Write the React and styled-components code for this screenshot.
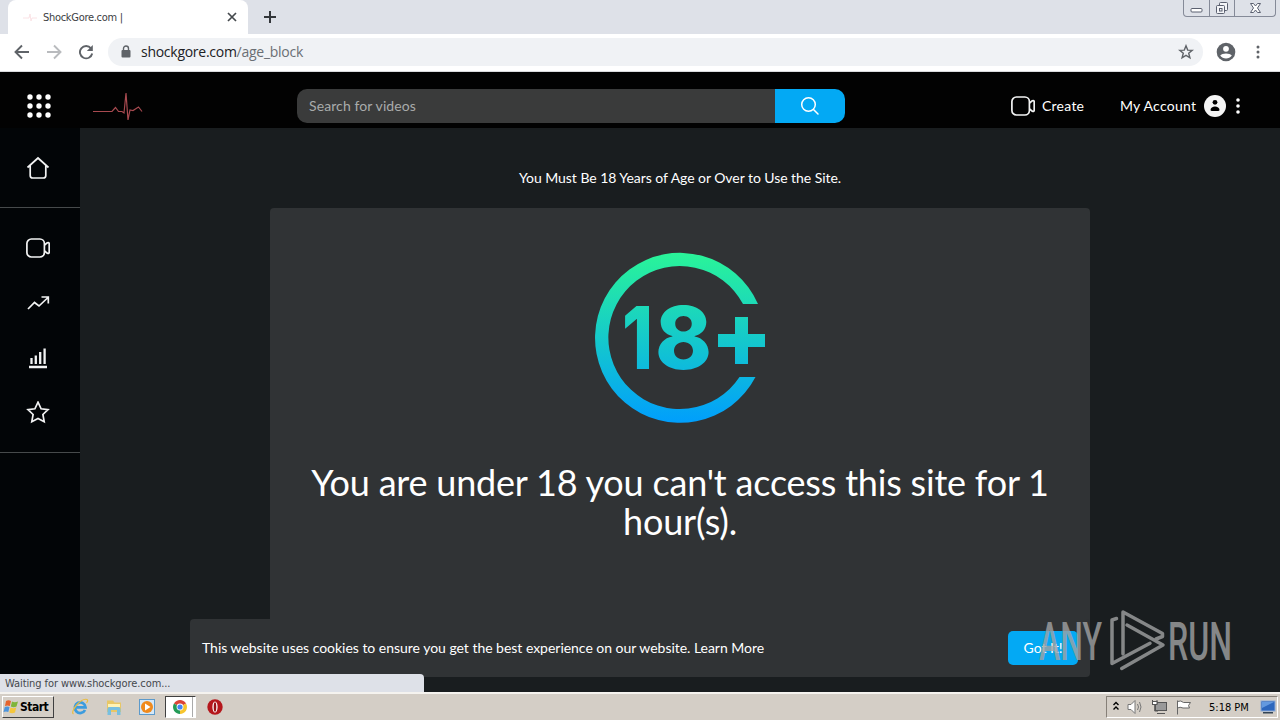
import React from 'react';
import styled, { createGlobalStyle } from 'styled-components';

const App = () => {
  return (
    <Desktop>
      <GlobalStyle />
      <TabStrip>
        <Tab>
          <Favicon viewBox="0 0 16 16">
            <path d="M1 9H7L8 5L9 12L10 9H15" />
          </Favicon>
          <TabTitle>ShockGore.com |</TabTitle>
          <CloseTab viewBox="0 0 10 10">
            <path d="M1 1L9 9M9 1L1 9" />
          </CloseTab>
        </Tab>
        <NewTab viewBox="0 0 14 14">
          <path d="M7 1V13M1 7H13" />
        </NewTab>
        <WindowButtons>
          <WindowButton $width={25}>
            <svg width="13" height="18" fill="#fff" stroke="#5b6070">
              <rect x="1" y="8.5" width="11" height="3.5" rx="1" />
            </svg>
          </WindowButton>
          <WindowButton $width={25}>
            <svg width="14" height="18" fill="#f4f5f8" stroke="#5b6070">
              <rect x="4.5" y="2.5" width="8" height="8" rx="1" />
              <rect x="1.5" y="5.5" width="8" height="8" rx="1" />
              <rect x="4.5" y="8.5" width="2.5" height="2.5" />
            </svg>
          </WindowButton>
          <WindowButton $width={41}>
            <svg width="13" height="18" fill="#fff" stroke="#5b6070">
              <path d="M1.5 3.5H4.5L6.5 6L8.5 3.5H11.5L8.5 8L11.5 12.500H8.500L6.500 10L4.500 12.500H1.500L4.500 8Z" />
            </svg>
          </WindowButton>
        </WindowButtons>
      </TabStrip>

      <Toolbar>
        <NavIcon viewBox="0 0 16 16">
          <path d="M15 8H2M8 1.500L1.500 8L8 14.500" />
        </NavIcon>
        <NavIcon viewBox="0 0 16 16" $muted>
          <path d="M1 8H14M8 1.500L14.500 8L8 14.500" />
        </NavIcon>
        <NavIcon viewBox="0 0 16 16">
          <path d="M13 4.300A6.200 6.200 0 1 0 14.200 9.500" />
          <path d="M14.800 1V7H8.800Z" fill="#5f6368" stroke="none" />
        </NavIcon>
        <AddressBar>
          <svg width="10" height="13" viewBox="0 0 10 13">
            <path d="M2.500 6V3.500a2.500 2.500 0 0 1 5 0V6" fill="none" stroke="#5f6368" strokeWidth="1.400" />
            <rect x="0.500" y="5" width="9" height="7.500" rx="1" fill="#5f6368" />
          </svg>
          <Url>shockgore.com<span>/age_block</span></Url>
          <svg width="16" height="16" viewBox="0 0 16 16" fill="none" stroke="#5f6368" strokeWidth="1.400">
            <path d="M8 1.800L9.700 6.100L14.200 6.400L10.700 9.300L11.900 13.800L8 11.300L4.100 13.800L5.300 9.300L1.800 6.400L6.300 6.100Z" />
          </svg>
        </AddressBar>
        <svg width="20" height="20" viewBox="0 0 20 20">
          <circle cx="10" cy="10" r="9.300" fill="#5f6368" />
          <circle cx="10" cy="6.800" r="2.900" fill="#fff" />
          <path d="M4.200 13.500C6 10.800 14 10.800 15.800 13.500A7 7 0 0 1 4.200 13.500Z" fill="#fff" />
        </svg>
        <ChromeMenu viewBox="0 0 4 16">
          <circle cx="2" cy="3" r="1.500" />
          <circle cx="2" cy="8" r="1.500" />
          <circle cx="2" cy="13" r="1.500" />
        </ChromeMenu>
      </Toolbar>

      <Page>
        <Header>
          <AppsIcon viewBox="0 0 26 26">
            {[4, 13, 22].map((y) => [4, 13, 22].map((x) => <circle key={`${x}-${y}`} cx={x} cy={y} r="2.700" />))}
          </AppsIcon>
          <Pulse viewBox="0 0 52 34">
            <path d="M1 22.500H20L23.500 18.500L26.500 22.500H30L32 24L34 4L36 31L38 21L41 21.500L46.500 18L50 22.500" />
          </Pulse>
          <SearchBox>
            <SearchInput>Search for videos</SearchInput>
            <SearchButton>
              <svg width="20" height="20" viewBox="0 0 20 20" fill="none" stroke="#fff" strokeWidth="1.500" strokeLinecap="round">
                <circle cx="8.500" cy="8.500" r="6.800" />
                <path d="M13.500 13.500L18 18" />
              </svg>
            </SearchButton>
          </SearchBox>
          <Create>
            <CameraIcon />
            <Label>Create</Label>
          </Create>
          <Account>
            <Label>My Account</Label>
            <svg width="22" height="22" viewBox="0 0 22 22">
              <circle cx="11" cy="11" r="11" fill="#f5f5f5" />
              <circle cx="11" cy="7.300" r="2.400" fill="#000" />
              <path d="M6.500 15C6.500 10.300 15.500 10.300 15.500 15Q15.500 16 14 16H8Q6.500 16 6.500 15Z" fill="#000" />
            </svg>
          </Account>
          <SiteMenu viewBox="0 0 4 18">
            <circle cx="2" cy="3" r="1.800" />
            <circle cx="2" cy="9" r="1.800" />
            <circle cx="2" cy="15" r="1.800" />
          </SiteMenu>
        </Header>

        <Body>
          <Sidebar>
            <SideGroup $height={79}>
              <SideLink $height={79}>
                <SideIcon viewBox="0 0 24 24">
                  <path d="M1.500 11.500L12 2L22.500 11.500M4.200 9.500V19.500Q4.200 22 6.700 22H17.300Q19.800 22 19.800 19.500V9.500" />
                </SideIcon>
              </SideLink>
            </SideGroup>
            <SideGroup $height={244}>
              <SideLink><CameraIcon /></SideLink>
              <SideLink>
                <SideIcon viewBox="0 0 24 24">
                  <path d="M2 18L8.500 11.500L13 15L22 6.500M15.500 6H22.300V12.500" />
                </SideIcon>
              </SideLink>
              <SideLink>
                <SideIcon viewBox="0 0 24 24" $bars>
                  <path d="M5.500 18V12M9.800 18V9.500M14.200 18V6M18.600 18V2.500M3 21H21" />
                </SideIcon>
              </SideLink>
              <SideLink>
                <SideIcon viewBox="0 0 24 24">
                  <path d="M12 1.200L15.100 7.800L22 8.700L16.900 13.500L18.200 20.700L12 17.500L5.800 20.700L7.100 13.500L2 8.700L8.900 7.800Z" />
                </SideIcon>
              </SideLink>
            </SideGroup>
          </Sidebar>

          <Main>
            <Notice>You Must Be 18 Years of Age or Over to Use the Site.</Notice>
            <Card>
              <AgeBadge />
              <Heading>You are under 18 you can't access this site for 1 hour(s).</Heading>
            </Card>
          </Main>
        </Body>

        <CookieBar>
          <Label>This website uses cookies to ensure you get the best experience on our website. Learn More</Label>
          <GotIt>Got It!</GotIt>
        </CookieBar>
        <StatusBubble>Waiting for www.shockgore.com...</StatusBubble>
        <Watermark />
      </Page>

      <Taskbar>
        <StartButton>
          <svg width="16" height="16" viewBox="0 0 16 16">
            <path d="M3 2Q5.500 .5 8 2L6.800 7Q4.500 5.800 2 7Z" fill="#e5632d" />
            <path d="M9 2.500Q11.500 4 15 2.500L13.500 7.500Q10.500 9 7.800 7.500Z" fill="#7fb53a" />
            <path d="M1.800 8Q4.200 6.800 6.500 8L5.300 13Q3 11.800 .5 13Z" fill="#4c94dc" />
            <path d="M7.500 8.500Q10.500 10 13.200 8.500L12 13.500Q9 15 6.300 13.500Z" fill="#f5c63c" />
          </svg>
          Start
        </StartButton>
        <QuickLaunch>
          <TaskIcon viewBox="0 0 18 18">
            <path d="M14 12A5.300 5.300 0 1 1 14.500 9.300H5" fill="none" stroke="#3c9cde" strokeWidth="2.800" />
            <path d="M2.500 16C-1.500 14 10-.5 16 1.500Q17.500 2.500 15.500 5" fill="none" stroke="#e9bd42" strokeWidth="1.200" />
          </TaskIcon>
          <TaskIcon viewBox="0 0 18 18">
            <path d="M2 2.500H8L9.500 4.500H16V14H2Z" fill="#e8c766" />
            <path d="M3 6H15V9H3Z" fill="#fff3b5" />
            <path d="M2.500 17V11Q2.500 9 5 9H13Q15.500 9 15.500 11V17H12V12H6V17Z" fill="#77bfe0" />
          </TaskIcon>
          <TaskIcon viewBox="0 0 18 18">
            <rect x="1.500" y="1.500" width="15" height="15" fill="#d5e8f8" stroke="#5c9acb" />
            <circle cx="9" cy="9" r="6" fill="#f08a1d" />
            <path d="M7 5.500L12.500 9L7 12.500Z" fill="#fff" />
          </TaskIcon>
          <ActiveTask>
            <svg width="16" height="16" viewBox="0 0 16 16">
              <path d="M8 8L1.940 4.500A7 7 0 0 1 14.060 4.500Z" fill="#db4437" />
              <path d="M8 8L14.060 4.500A7 7 0 0 1 8 15Z" fill="#f7c52d" />
              <path d="M8 8V15A7 7 0 0 1 1.940 4.500Z" fill="#249b57" />
              <circle cx="8" cy="8" r="3.400" fill="#fff" />
              <circle cx="8" cy="8" r="2.600" fill="#4285f4" />
            </svg>
          </ActiveTask>
          <TaskIcon viewBox="0 0 18 18">
            <circle cx="9" cy="9" r="7.700" fill="#b5171c" />
            <ellipse cx="9" cy="9" rx="2.600" ry="5.500" fill="#fff" />
            <ellipse cx="9" cy="9" rx="1.300" ry="4.700" fill="#9a1115" />
          </TaskIcon>
        </QuickLaunch>
        <Tray>
          <svg width="8" height="12" viewBox="0 0 8 12" fill="none" stroke="#000" strokeWidth="1.400">
            <path d="M1.500 4L4 1.500L6.500 4M1.500 8.500L4 6L6.500 8.500" />
          </svg>
          <svg width="17" height="16" viewBox="0 0 17 16" fill="#fff" stroke="#777">
            <path d="M1 5.500H4L8 1.500V14.500L4 10.500H1Z" />
            <path d="M10.500 5Q12.500 8 10.500 11M12.500 3Q15.500 8 12.500 13" fill="none" />
          </svg>
          <svg width="17" height="16" viewBox="0 0 17 16" stroke="#555">
            <rect x="4.500" y="3.500" width="11" height="8" fill="#999" stroke="#555" />
            <path d="M6 14.500H14M1.500 1V5H6V1M3.700 5V12H7" fill="none" />
            <rect x="1.500" y="2.500" width="4.500" height="3" fill="#fff" />
          </svg>
          <svg width="17" height="16" viewBox="0 0 17 16" fill="#fff" stroke="#666">
            <path d="M2.500 15.500V1.500M2.500 2.500Q6 1 8.500 3.500H15.500L13.500 6.500L14.500 9H8Q5 7.500 2.500 9Z" />
          </svg>
          <Clock>5:18 PM</Clock>
          <svg width="16" height="14" viewBox="0 0 16 14">
            <rect x="1" y="1" width="14" height="10" fill="#2d67bd" stroke="#8aa9d6" />
            <path d="M2 2H14L2 8Z" fill="#6399df" />
            <rect x="3" y="12" width="10" height="1.500" fill="#345" />
          </svg>
        </Tray>
      </Taskbar>
    </Desktop>
  );
};

const CameraIcon = () => (
  <SideIcon viewBox="0 0 24 24">
    <rect x="0.900" y="3" width="17.500" height="18" rx="4.500" />
    <path d="M18.500 9L21.300 6.800Q23.200 6 23.200 8V16Q23.200 18 21.300 17.200L18.500 15" />
  </SideIcon>
);

const AgeBadge = () => (
  <svg width="172" height="172" viewBox="0 0 172 172">
    <defs>
      <linearGradient id="age" gradientUnits="userSpaceOnUse" x1="0" y1="0" x2="0" y2="172">
        <stop offset="0" stopColor="#2af598" />
        <stop offset="1" stopColor="#009efd" />
      </linearGradient>
    </defs>
    <path
      fill="url(#age)"
      d="M164 52A85 85 0 1 0 161.500 125H145.500A71.500 71.500 0 1 1 149 52Z"
    />
    <BadgeText fill="url(#age)" x="28" y="117" textLength="31" lengthAdjust="spacingAndGlyphs">1</BadgeText>
    <BadgeText fill="url(#age)" x="61" y="117" textLength="57" lengthAdjust="spacingAndGlyphs">8</BadgeText>
    <path fill="url(#age)" d="M141 65H154V82H171V95H154V112H141V95H124V82H141Z" />
  </svg>
);

const Watermark = () => (
  <WatermarkSvg viewBox="0 0 200 70">
    <text x="4" y="54" textLength="63" lengthAdjust="spacingAndGlyphs">ANY</text>
    <g fill="none" stroke="#a0a2a3" strokeWidth="3.500" strokeLinejoin="round" strokeLinecap="round">
      <path d="M88 48V6L127.500 27.500V30.500L121 33" />
      <path d="M81.500 12.500L77 14V57.500L115 37.300" />
      <path d="M92 19L128 39L86.700 62.500" />
    </g>
    <text x="133" y="54" textLength="64" lengthAdjust="spacingAndGlyphs">RUN</text>
  </WatermarkSvg>
);

// Styled Components
const GlobalStyle = createGlobalStyle`
  * {
    box-sizing: border-box;
  }

  body {
    margin: 0;
    overflow: hidden;
  }

  svg {
    flex-shrink: 0;
  }
`;

const Desktop = styled.div`
  display: flex;
  flex-direction: column;
  width: 1280px;
  height: 720px;
  font-family: Lato, sans-serif;
`;

const TabStrip = styled.div`
  display: flex;
  height: 34px;
  padding-left: 8px;
  background: #dee1e8;
`;

const Tab = styled.div`
  display: flex;
  align-items: center;
  width: 240px;
  padding: 0 11px 0 14px;
  background: #fff;
  border-radius: 8px 8px 0 0;
`;

const Favicon = styled.svg`
  width: 16px;
  height: 16px;
  fill: none;
  stroke: #fbe3e6;
`;

const TabTitle = styled.div`
  flex: 1;
  margin-left: 5px;
  font: 11px 'DejaVu Sans Condensed', 'DejaVu Sans', sans-serif;
  letter-spacing: -0.3px;
  color: #3c4043;
`;

const CloseTab = styled.svg`
  width: 10px;
  height: 10px;
  stroke: #45494d;
  stroke-width: 1.7;
`;

const NewTab = styled.svg`
  width: 14px;
  height: 14px;
  margin: 10px 0 0 15px;
  stroke: #33363a;
  stroke-width: 2;
`;

const WindowButtons = styled.div`
  display: flex;
  height: 17px;
  margin: 0 4px 0 auto;
  border: 1px solid #858a98;
  border-top: 0;
  border-radius: 0 0 4px 4px;
`;

const WindowButton = styled.div`
  display: flex;
  justify-content: center;
  width: ${(props) => props.$width}px;

  & + & {
    border-left: 1px solid #858a98;
  }
`;

const Toolbar = styled.div`
  display: flex;
  align-items: center;
  height: 38px;
  padding: 0 20px 2px 14px;
  background: #fff;
  border-bottom: 1px solid #d9dadd;
`;

const NavIcon = styled.svg`
  width: 16px;
  height: 16px;
  margin-right: 16px;
  fill: none;
  stroke: ${(props) => (props.$muted ? '#b9bbbe' : '#5f6368')};
  stroke-width: 1.9;
`;

const AddressBar = styled.div`
  display: flex;
  align-items: center;
  width: 1095px;
  height: 28px;
  margin: 0 13px 0 -2px;
  padding: 0 9px 0 13px;
  background: #f0f2f5;
  border-radius: 14px;
`;

const Url = styled.div`
  flex: 1;
  margin-left: 10px;
  font: 14px 'Open Sans', sans-serif;
  letter-spacing: -0.27px;
  color: #202124;

  span {
    color: #6b6f74;
  }
`;

const ChromeMenu = styled.svg`
  width: 4px;
  height: 16px;
  margin-left: 20px;
  fill: #5f6368;
`;

const Page = styled.div`
  position: relative;
  display: flex;
  flex-direction: column;
  height: 620px;
  overflow: hidden;
  background: #191d1f;
  color: #fff;
`;

const Header = styled.header`
  display: flex;
  align-items: center;
  height: 56px;
  padding: 12px 39px 0 26px;
  background: #020202;
  font-size: 14px;
`;

const Label = styled.span`
  padding-bottom: 2px;
  white-space: nowrap;
`;

const AppsIcon = styled.svg`
  width: 26px;
  height: 26px;
  fill: #fff;
`;

const Pulse = styled.svg`
  width: 52px;
  height: 34px;
  margin-left: 40px;
  fill: none;
  stroke: #a84a50;
  stroke-width: 1.2;
`;

const SearchBox = styled.div`
  display: flex;
  width: 548px;
  height: 34px;
  margin-left: 153px;
  border-radius: 10px;
  overflow: hidden;
`;

const SearchInput = styled.div`
  flex: 1;
  padding-left: 12px;
  background: #3a3b3b;
  line-height: 34px;
  letter-spacing: 0.1px;
  color: #a9abab;
`;

const SearchButton = styled.div`
  display: flex;
  align-items: center;
  justify-content: center;
  width: 70px;
  background: #03a9f4;
`;

const Create = styled.div`
  display: flex;
  align-items: center;
  gap: 7px;
  width: 109px;
  margin-left: 166px;
  letter-spacing: 0.25px;
`;

const Account = styled.div`
  display: flex;
  align-items: center;
  justify-content: space-between;
  width: 106px;
  letter-spacing: 0.25px;
`;

const SiteMenu = styled.svg`
  width: 4px;
  height: 18px;
  margin-left: 10px;
  fill: #fff;
`;

const Body = styled.div`
  display: flex;
  flex: 1;
`;

const Sidebar = styled.nav`
  width: 80px;
  background: #020507;
`;

const SideGroup = styled.div`
  height: ${(props) => props.$height + 1}px;
  padding-top: ${(props) => (props.$height > 100 ? 12 : 0)}px;
  border-bottom: 1px solid #464a4b;
`;

const SideLink = styled.div`
  display: flex;
  align-items: center;
  justify-content: center;
  height: ${(props) => props.$height || 55}px;
  padding-right: 4px;
`;

const SideIcon = styled.svg`
  width: 24px;
  height: 24px;
  fill: none;
  stroke: #f2f3f3;
  stroke-width: ${(props) => (props.$bars ? 2.3 : 1.7)};
`;

const Main = styled.main`
  display: flex;
  flex: 1;
  flex-direction: column;
  align-items: center;
  padding-top: 40px;
`;

const Notice = styled.div`
  height: 40px;
  font-size: 14px;
  line-height: 20px;
  letter-spacing: -0.05px;
`;

const Card = styled.section`
  display: flex;
  flex-direction: column;
  align-items: center;
  width: 820px;
  height: 460px;
  padding: 44px 30px 0;
  background: #303335;
  border-radius: 4px 4px 0 0;
`;

const BadgeText = styled.text`
  font: 800 86px Inter, sans-serif;
`;

const Heading = styled.h1`
  margin: 39px 0 0;
  font-size: 36px;
  font-weight: 400;
  line-height: 39px;
  letter-spacing: -0.2px;
  text-align: center;
`;

const CookieBar = styled.div`
  position: absolute;
  left: 190px;
  bottom: 15px;
  display: flex;
  align-items: center;
  justify-content: space-between;
  width: 900px;
  height: 58px;
  padding: 0 12px;
  background: #303335;
  border-radius: 4px;
  font-size: 14px;
  letter-spacing: -0.025px;
`;

const GotIt = styled.div`
  width: 70px;
  height: 34px;
  background: #03a9f4;
  border-radius: 5px;
  line-height: 34px;
  text-align: center;
`;

const StatusBubble = styled.div`
  position: absolute;
  left: 0;
  bottom: 0;
  width: 424px;
  height: 18px;
  padding-left: 5px;
  background: #dee1e8;
  border-top-right-radius: 4px;
  font: 11px/20px 'DejaVu Sans Condensed', 'DejaVu Sans', sans-serif;
  letter-spacing: -0.08px;
  color: #45484d;
`;

const WatermarkSvg = styled.svg`
  position: absolute;
  left: 1035px;
  bottom: 16px;
  width: 200px;
  height: 70px;
  opacity: 0.8;

  text {
    font: 500 53px Roboto, sans-serif;
    fill: #a0a2a3;
  }
`;

const Taskbar = styled.div`
  display: flex;
  align-items: center;
  height: 28px;
  padding: 1px 2px;
  background: #d4cec6;
  border-top: 2px solid #f5f3ef;
`;

const StartButton = styled.div`
  display: flex;
  align-items: center;
  gap: 1px;
  width: 52px;
  height: 22px;
  border: 1px solid;
  border-color: #fff #404040 #404040 #fff;
  font: bold 12px 'DejaVu Sans Condensed', 'DejaVu Sans', sans-serif;
  letter-spacing: -0.5px;
`;

const QuickLaunch = styled.div`
  display: flex;
  align-items: center;
  gap: 15.5px;
  margin-left: 17px;
`;

const TaskIcon = styled.svg`
  width: 18px;
  height: 18px;
`;

const ActiveTask = styled.div`
  display: flex;
  align-items: center;
  width: 31px;
  height: 22px;
  margin: 0 -5px 0 -7px;
  padding-left: 6px;
  background: linear-gradient(90deg, #fff 26px, #aaa 26px, #aaa 27px, #fff 27px);
  border: 1px solid;
  border-color: #404040 #fff #fff #404040;
`;

const Tray = styled.div`
  display: flex;
  align-items: center;
  gap: 7px;
  width: 172px;
  height: 22px;
  margin-left: auto;
  padding-left: 5px;
  border: 1px solid;
  border-color: #868078 #fff #fff #868078;
`;

const Clock = styled.div`
  width: 44px;
  margin-left: 10px;
  font: 11px 'DejaVu Sans Condensed', 'DejaVu Sans', sans-serif;
  color: #000;
  white-space: nowrap;
`;

export default App;
